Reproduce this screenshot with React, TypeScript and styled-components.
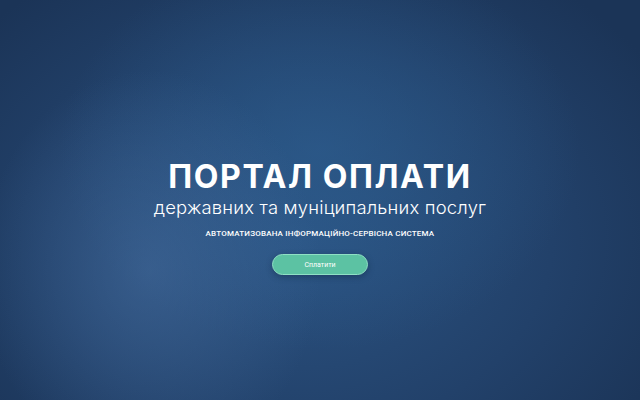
import React from "react";
import styled, { createGlobalStyle } from "styled-components";

const GlobalStyle = createGlobalStyle`
  html, body {
    margin: 0;
    padding: 0;
  }
  body {
    font-family: "Open Sans", "Liberation Sans", sans-serif;
  }
`;

const Hero = styled.main`
  width: 640px;
  height: 400px;
  display: flex;
  flex-direction: column;
  align-items: center;
  justify-content: center;
  padding-top: 34px;
  box-sizing: border-box;
  color: #fff;
  background:
    radial-gradient(ellipse 170px 200px at 150px 270px, rgba(70, 110, 160, 0.55), rgba(70, 110, 160, 0) 100%),
    radial-gradient(ellipse 260px 200px at 320px 150px, rgba(45, 95, 145, 0.6), rgba(45, 95, 145, 0) 100%),
    radial-gradient(ellipse 420px 320px at 300px 240px, #2b5382 0%, #22416a 60%, #1b3457 100%);
`;

const Title = styled.h1`
  margin: 0;
  font-family: Inter, "Open Sans", sans-serif;
  font-weight: 700;
  font-size: 32px;
  line-height: 36px;
  letter-spacing: 1.6px;
`;

const Subtitle = styled.h2`
  margin: 0;
  font-family: Inter, "Open Sans", sans-serif;
  font-weight: 300;
  font-size: 18.4px;
  line-height: 24px;
  letter-spacing: 0.2px;
`;

const Caption = styled.p`
  margin: 10px 0 0;
  font-family: Roboto, "Liberation Sans", sans-serif;
  font-weight: 500;
  font-size: 8px;
  letter-spacing: 0.2px;
  text-transform: uppercase;
`;

const PayButton = styled.button`
  margin-top: 16px;
  width: 96px;
  height: 21px;
  border-radius: 11px;
  border: 1px solid #8fe0c4;
  background: #5cc2a3;
  color: #fff;
  font-family: Roboto, "Liberation Sans", sans-serif;
  font-weight: 400;
  font-size: 7px;
  cursor: pointer;
  box-shadow: 0 2px 6px rgba(10, 30, 50, 0.35);
`;

const App = () => {
  return (
    <>
      <GlobalStyle />
      <Hero>
        <Title>ПОРТАЛ ОПЛАТИ</Title>
        <Subtitle>державних та муніципальних послуг</Subtitle>
        <Caption>Автоматизована інформаційно-сервісна система</Caption>
        <PayButton>Сплатити</PayButton>
      </Hero>
    </>
  );
};

export default App;
